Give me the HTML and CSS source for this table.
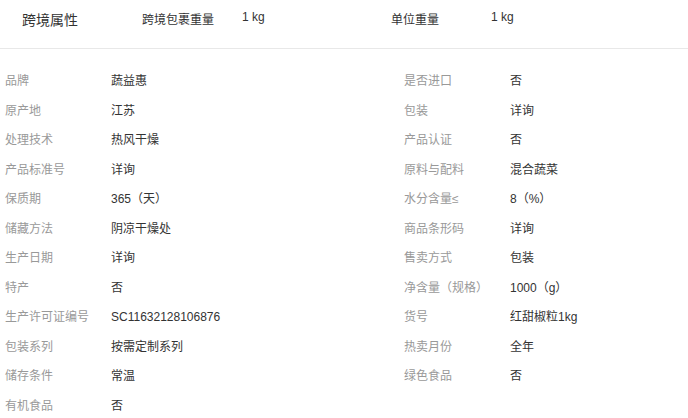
FILE: index.html
```html
<!DOCTYPE html>
<html lang="zh-CN">
    <head>
        <meta charset="UTF-8">
        <title>商品属性</title>
        <link rel="stylesheet" href="styles.css">
    </head>
    <body>
        <div class="cross">
            <h3 class="cross-title">跨境属性</h3>
            <div class="cross-item"><span class="cross-name">跨境包裹重量</span><span>1 kg</span></div>
            <div class="cross-item"><span class="cross-name">单位重量</span><span>1 kg</span></div>
        </div>
        <ul class="attrs">
            <li><span class="name">品牌</span><span class="val">蔬益惠</span></li>
            <li><span class="name">是否进口</span><span class="val">否</span></li>
            <li><span class="name">原产地</span><span class="val">江苏</span></li>
            <li><span class="name">包装</span><span class="val">详询</span></li>
            <li><span class="name">处理技术</span><span class="val">热风干燥</span></li>
            <li><span class="name">产品认证</span><span class="val">否</span></li>
            <li><span class="name">产品标准号</span><span class="val">详询</span></li>
            <li><span class="name">原料与配料</span><span class="val">混合蔬菜</span></li>
            <li><span class="name">保质期</span><span class="val">365（天）</span></li>
            <li><span class="name">水分含量≤</span><span class="val">8（%）</span></li>
            <li><span class="name">储藏方法</span><span class="val">阴凉干燥处</span></li>
            <li><span class="name">商品条形码</span><span class="val">详询</span></li>
            <li><span class="name">生产日期</span><span class="val">详询</span></li>
            <li><span class="name">售卖方式</span><span class="val">包装</span></li>
            <li><span class="name">特产</span><span class="val">否</span></li>
            <li><span class="name">净含量（规格）</span><span class="val">1000（g）</span></li>
            <li><span class="name">生产许可证编号</span><span class="val">SC11632128106876</span></li>
            <li><span class="name">货号</span><span class="val">红甜椒粒1kg</span></li>
            <li><span class="name">包装系列</span><span class="val">按需定制系列</span></li>
            <li><span class="name">热卖月份</span><span class="val">全年</span></li>
            <li><span class="name">储存条件</span><span class="val">常温</span></li>
            <li><span class="name">绿色食品</span><span class="val">否</span></li>
            <li><span class="name">有机食品</span><span class="val">否</span></li>
        </ul>
    </body>
</html>
```

FILE: styles.css
```css
*{
    padding: 0px;
    margin: 0px;
}
body{
    font-family: "Liberation Sans", "Noto Sans CJK SC", sans-serif;
    font-size: 12px;
    color: #333;
    background: #fff;
}
.cross{
    display: flex;
    align-items: center;
    height: 37px;
    border-bottom: 1px solid #e8e8e8;
    padding-bottom: 11px;
}
.cross-title{
    width: 142px;
    padding-left: 22px;
    box-sizing: border-box;
    font-size: 14px;
    font-weight: normal;
    color: #333;
}
.cross-item{
    display: flex;
    width: 249px;
}
.cross-name{
    width: 100px;
}
.attrs{
    list-style: none;
    display: grid;
    grid-template-columns: 399px 289px;
    padding: 18px 0 0 5px;
}
.attrs li{
    display: flex;
    height: 29.5px;
    line-height: 29.5px;
}
.attrs .name{
    width: 106px;
    color: #999;
    white-space: nowrap;
}
.attrs .val{
    color: #333;
    white-space: nowrap;
}
```
